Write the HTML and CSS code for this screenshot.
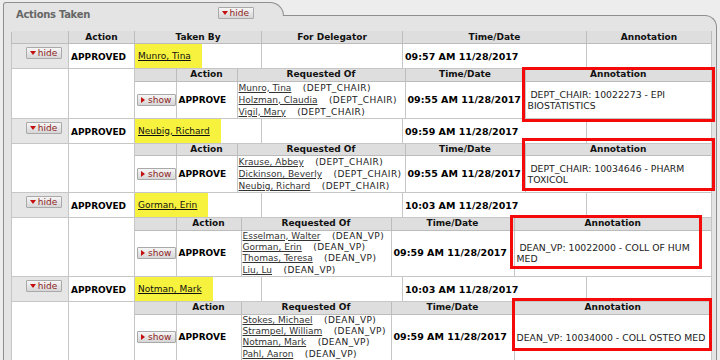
FILE: index.html
```html
<!DOCTYPE html>
<html lang="en">
<head>
	<meta charset="UTF-8">
	<title>Actions Taken</title>
	<link rel="stylesheet" href="styles.css">
</head>
<body>
	<div class="panel">
		<div class="tab">
			<h2 class="tab-title">Actions Taken</h2>
			<button class="tog"><span class="tri-down"></span>hide</button>
		</div>

		<div class="panel-body">
			<table class="actions">
				<colgroup>
					<col class="c-tog"><col class="c-act"><col class="c-by"><col class="c-deleg"><col class="c-time"><col>
				</colgroup>
				<thead>
					<tr><th></th><th>Action</th><th>Taken By</th><th>For Delegator</th><th>Time/Date</th><th>Annotation</th></tr>
				</thead>
				<tbody>
					<!-- Munro -->
					<tr class="main-row">
						<td class="tog-cell"><button class="tog"><span class="tri-down"></span>hide</button></td>
						<td class="strong">APPROVED</td>
						<td class="by"><a class="hl">Munro, Tina</a></td>
						<td></td>
						<td class="strong time">09:57 AM 11/28/2017</td>
						<td></td>
					</tr>
					<tr class="sub-row">
						<td></td><td></td>
						<td colspan="4" class="sub-cell">
							<div class="sub">
								<table class="requests sub-a">
									<colgroup><col class="r-tog"><col class="r-act"><col class="r-req"><col class="r-time"><col></colgroup>
									<thead><tr><th></th><th>Action</th><th>Requested Of</th><th>Time/Date</th><th>Annotation</th></tr></thead>
									<tbody>
										<tr>
											<td class="show-cell"><button class="tog"><span class="tri-right"></span>show</button></td>
											<td class="strong">APPROVE</td>
											<td class="req">
												<div class="req-line"><a class="person">Munro, Tina</a>&nbsp;&nbsp;&nbsp; <span class="role">(DEPT_CHAIR)</span></div>
												<div class="req-line"><a class="person">Holzman, Claudia</a>&nbsp;&nbsp;&nbsp; <span class="role">(DEPT_CHAIR)</span></div>
												<div class="req-line"><a class="person">Vigil, Mary</a>&nbsp;&nbsp;&nbsp; <span class="role">(DEPT_CHAIR)</span></div>
											</td>
											<td class="strong time">09:55 AM 11/28/2017</td>
											<td class="annot">&nbsp;DEPT_CHAIR: 10022273 - EPI BIOSTATISTICS</td>
										</tr>
									</tbody>
								</table>
								<div class="mark mark-1"></div>
							</div>
						</td>
					</tr>

					<!-- Neubig -->
					<tr class="main-row">
						<td class="tog-cell"><button class="tog"><span class="tri-down"></span>hide</button></td>
						<td class="strong">APPROVED</td>
						<td class="by"><a class="hl">Neubig, Richard</a></td>
						<td></td>
						<td class="strong time">09:59 AM 11/28/2017</td>
						<td></td>
					</tr>
					<tr class="sub-row">
						<td></td><td></td>
						<td colspan="4" class="sub-cell">
							<div class="sub">
								<table class="requests sub-a">
									<colgroup><col class="r-tog"><col class="r-act"><col class="r-req"><col class="r-time"><col></colgroup>
									<thead><tr><th></th><th>Action</th><th>Requested Of</th><th>Time/Date</th><th>Annotation</th></tr></thead>
									<tbody>
										<tr>
											<td class="show-cell"><button class="tog"><span class="tri-right"></span>show</button></td>
											<td class="strong">APPROVE</td>
											<td class="req">
												<div class="req-line"><a class="person">Krause, Abbey</a>&nbsp;&nbsp;&nbsp; <span class="role">(DEPT_CHAIR)</span></div>
												<div class="req-line"><a class="person">Dickinson, Beverly</a>&nbsp;&nbsp;&nbsp; <span class="role">(DEPT_CHAIR)</span></div>
												<div class="req-line"><a class="person">Neubig, Richard</a>&nbsp;&nbsp;&nbsp; <span class="role">(DEPT_CHAIR)</span></div>
											</td>
											<td class="strong time">09:55 AM 11/28/2017</td>
											<td class="annot">&nbsp;DEPT_CHAIR: 10034646 - PHARM TOXICOL</td>
										</tr>
									</tbody>
								</table>
								<div class="mark mark-2"></div>
							</div>
						</td>
					</tr>

					<!-- Gorman -->
					<tr class="main-row">
						<td class="tog-cell"><button class="tog"><span class="tri-down"></span>hide</button></td>
						<td class="strong">APPROVED</td>
						<td class="by"><a class="hl">Gorman, Erin</a></td>
						<td></td>
						<td class="strong time">10:03 AM 11/28/2017</td>
						<td></td>
					</tr>
					<tr class="sub-row">
						<td></td><td></td>
						<td colspan="4" class="sub-cell">
							<div class="sub">
								<table class="requests sub-b">
									<colgroup><col class="r-tog"><col class="r-act"><col class="r-req"><col class="r-time"><col></colgroup>
									<thead><tr><th></th><th>Action</th><th>Requested Of</th><th>Time/Date</th><th>Annotation</th></tr></thead>
									<tbody>
										<tr>
											<td class="show-cell"><button class="tog"><span class="tri-right"></span>show</button></td>
											<td class="strong">APPROVE</td>
											<td class="req">
												<div class="req-line"><a class="person">Esselman, Walter</a>&nbsp;&nbsp;&nbsp; <span class="role">(DEAN_VP)</span></div>
												<div class="req-line"><a class="person">Gorman, Erin</a>&nbsp;&nbsp;&nbsp; <span class="role">(DEAN_VP)</span></div>
												<div class="req-line"><a class="person">Thomas, Teresa</a>&nbsp;&nbsp;&nbsp; <span class="role">(DEAN_VP)</span></div>
												<div class="req-line"><a class="person">Liu, Lu</a>&nbsp;&nbsp;&nbsp; <span class="role">(DEAN_VP)</span></div>
											</td>
											<td class="strong time">09:59 AM 11/28/2017</td>
											<td class="annot">&nbsp;DEAN_VP: 10022000 - COLL OF HUM MED</td>
										</tr>
									</tbody>
								</table>
								<div class="mark mark-3"></div>
							</div>
						</td>
					</tr>

					<!-- Notman -->
					<tr class="main-row">
						<td class="tog-cell"><button class="tog"><span class="tri-down"></span>hide</button></td>
						<td class="strong">APPROVED</td>
						<td class="by"><a class="hl">Notman, Mark</a></td>
						<td></td>
						<td class="strong time">10:03 AM 11/28/2017</td>
						<td></td>
					</tr>
					<tr class="sub-row">
						<td></td><td></td>
						<td colspan="4" class="sub-cell">
							<div class="sub">
								<table class="requests sub-b">
									<colgroup><col class="r-tog"><col class="r-act"><col class="r-req"><col class="r-time"><col></colgroup>
									<thead><tr><th></th><th>Action</th><th>Requested Of</th><th>Time/Date</th><th>Annotation</th></tr></thead>
									<tbody>
										<tr>
											<td class="show-cell"><button class="tog"><span class="tri-right"></span>show</button></td>
											<td class="strong">APPROVE</td>
											<td class="req">
												<div class="req-line"><a class="person">Stokes, Michael</a>&nbsp;&nbsp;&nbsp; <span class="role">(DEAN_VP)</span></div>
												<div class="req-line"><a class="person">Strampel, William</a>&nbsp;&nbsp;&nbsp; <span class="role">(DEAN_VP)</span></div>
												<div class="req-line"><a class="person">Notman, Mark</a>&nbsp;&nbsp;&nbsp; <span class="role">(DEAN_VP)</span></div>
												<div class="req-line"><a class="person">Pahl, Aaron</a>&nbsp;&nbsp;&nbsp; <span class="role">(DEAN_VP)</span></div>
											</td>
											<td class="strong time">09:59 AM 11/28/2017</td>
											<td class="annot">DEAN_VP: 10034000 - COLL OSTEO MED</td>
										</tr>
									</tbody>
								</table>
								<div class="mark mark-4"></div>
							</div>
						</td>
					</tr>
				</tbody>
			</table>
		</div>
	</div>
</body>
</html>
```

FILE: styles.css
```css
* {
	margin: 0;
	padding: 0;
	box-sizing: border-box;
}
body {
	background-color: #ededed;
	font-family: "DejaVu Sans", Verdana, sans-serif;
	font-size: 9px;
	color: #111;
	height: 360px;
	overflow: hidden;
}

/* Panel + tab */
.panel {
	margin: 2px 3px 0 3px;
}
.tab {
	position: relative;
	z-index: 1;
	width: 281px;
	height: 14px;
	margin-bottom: -1px;
	display: flex;
	justify-content: space-between;
	align-items: flex-start;
	padding: 4px 29px 0 12px;
	background-color: #e4e4e4;
	border: 1px solid #8f8f8f;
	border-bottom: 0;
	border-radius: 3px 14px 0 0;
}
.tab-title {
	font-size: 10px;
	font-weight: bold;
	color: #666;
	letter-spacing: -.3px;
	line-height: 12px;
	margin-top: 2px;
}
.panel-body {
	height: 400px;
	padding: 15px 4px 0 7px;
	background-color: #e4e4e4;
	border: 1px solid #8f8f8f;
	border-bottom: 0;
	border-top-right-radius: 12px;
}

/* Toggle buttons */
.tog {
	display: inline-flex;
	align-items: center;
	gap: 2px;
	height: 12px;
	padding: 0 4px 0 3px;
	font-family: "DejaVu Sans", Verdana, sans-serif;
	font-size: 9px;
	line-height: 10px;
	color: #8e1d1d;
	background: linear-gradient(#f6f6f6, #d6d6d6);
	border: 1px solid #a9a9a9;
	border-radius: 1px;
	cursor: pointer;
}
.tri-down {
	width: 0;
	height: 0;
	border-left: 3px solid transparent;
	border-right: 3px solid transparent;
	border-top: 4px solid #c41010;
}
.tri-right {
	width: 0;
	height: 0;
	border-top: 3px solid transparent;
	border-bottom: 3px solid transparent;
	border-left: 4px solid #c41010;
	margin-right: 1px;
}

/* Main table */
.actions {
	width: 100%;
	table-layout: fixed;
	border-collapse: collapse;
	background-color: #fff;
}
.c-tog { width: 57px; }
.c-act { width: 66px; }
.c-by { width: 127px; }
.c-deleg { width: 141px; }
.c-time { width: 184px; }

th {
	height: 12px;
	padding: 0 2px;
	line-height: 11px;
	font-weight: bold;
	text-align: center;
	background-color: #dedede;
	border: 1px solid #bcbcbc;
}
.actions > thead th {
	border-top-color: #dedede;
}
td {
	padding: 0 2px;
	line-height: 12px;
	text-align: left;
	vertical-align: middle;
	border: 1px solid #c6c6c6;
}
.main-row td {
	height: 25px;
	padding-top: 2px;
}
.main-row .tog-cell {
	padding: 2px 0 0 8px;
	vertical-align: top;
	text-align: center;
	background-color: #e6e6e6;
}
.strong {
	font-weight: bold;
	color: #000;
}
.time {
	font-size: 9.5px;
}
.main-row .by {
	padding: 0;
}
.hl {
	display: inline-block;
	height: 24px;
	padding: 6px 11px 0 3px;
	background-color: #f7f23e;
	color: #111;
	text-decoration: underline;
}

/* Nested request tables */
.sub-cell {
	padding: 0;
}
.sub {
	position: relative;
}
.requests {
	width: 100%;
	table-layout: fixed;
	border-collapse: collapse;
}
.requests thead th {
	border-top: 0;
}
.requests tr > :first-child {
	border-left: 0;
}
.requests tr > :last-child {
	border-right: 0;
}
.requests tbody td {
	border-bottom: 0;
}
.r-tog { width: 41px; }
.sub-a .r-act { width: 61px; }
.sub-a .r-req { width: 168px; }
.sub-a .r-time { width: 120px; }
.sub-b .r-act { width: 65px; }
.sub-b .r-req { width: 150px; }
.sub-b .r-time { width: 123px; }

.show-cell {
	text-align: center;
}
.req {
	padding: 0 1px;
	color: #222;
}
.req-line {
	height: 12px;
	line-height: 12px;
	white-space: nowrap;
}
.sub-b .req-line {
	height: 11.4px;
	line-height: 11.4px;
}
.person {
	color: #333;
	text-decoration: underline;
}
.role {
	letter-spacing: .4px;
}
.annot {
	font-size: 9.3px;
	line-height: 11px;
	color: #222;
}

/* Red review marks */
.mark {
	position: absolute;
	border: 3px solid #f50a0a;
	pointer-events: none;
}
.mark-1 { top: -2px; bottom: -4px; right: -4px; width: 193px; }
.mark-2 { top: -6px; bottom: 1px; right: -4px; width: 193px; }
.mark-3 { top: -3px; bottom: 7px; right: 9px; width: 192px; }
.mark-4 { top: -4px; bottom: 9px; right: -1px; width: 200px; }
```
